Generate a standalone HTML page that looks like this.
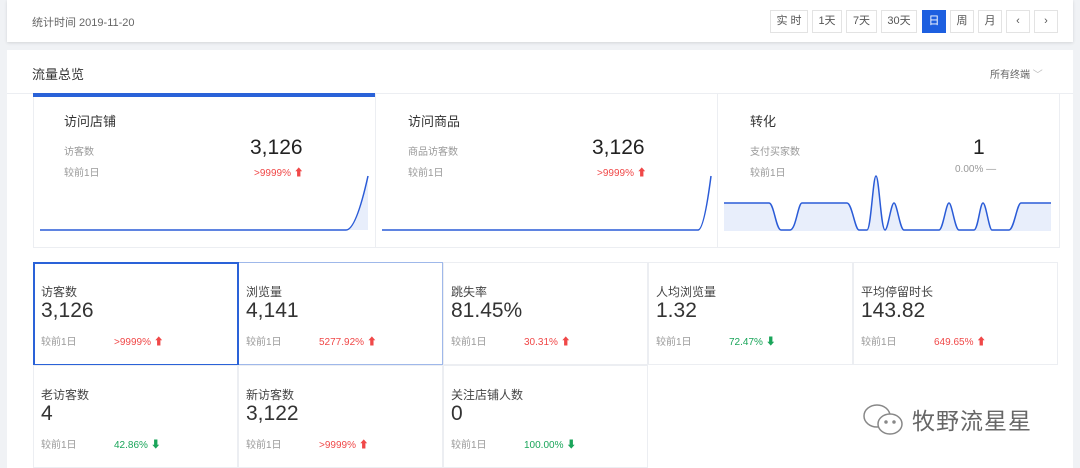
<!DOCTYPE html>
<html><head><meta charset="utf-8"><style>
*{margin:0;padding:0;box-sizing:border-box}
body{width:1080px;height:468px;background:#f0f2f5;font-family:"Liberation Sans","Noto Sans CJK SC",sans-serif;position:relative;overflow:hidden;color:#333}
.a{position:absolute}
.top{left:7px;top:0;width:1066px;height:42px;background:#fff;box-shadow:0 1px 3px rgba(0,0,0,.12)}
.btn{position:absolute;top:10px;height:23px;border:1px solid #e3e3e3;font-size:11px;color:#555;text-align:center;line-height:21px;background:#fff}
.main{left:7px;top:50px;width:1066px;height:418px;background:#fff}
.card{position:absolute;top:93px;height:155px;border:1px solid #eceef2;background:#fff}
.ct{position:absolute;font-size:13px;color:#333}
.lab{position:absolute;font-size:10px;color:#999}
.big{position:absolute;font-size:21px;color:#222}
.red{color:#f04848}.green{color:#1aa55a}
.m{position:absolute;width:205px;height:103px;border:1px solid #eceef2;background:#fff}
.m .t{position:absolute;left:7px;top:20px;font-size:12px;color:#444}
.m .v{position:absolute;left:7px;top:36px;font-size:21px;color:#333}
.m .c{position:absolute;left:7px;top:70px;font-size:10px;color:#999}
.m .p{position:absolute;left:80px;top:70px;font-size:10px}
</style></head><body>
<div class="a top"><div class="a" style="left:25px;top:14px;font-size:11px;color:#666">统计时间 2019-11-20</div></div>
<div class="btn" style="left:770px;width:38px">实 时</div>
<div class="btn" style="left:812px;width:30px">1天</div>
<div class="btn" style="left:846px;width:31px">7天</div>
<div class="btn" style="left:881px;width:36px">30天</div>
<div class="btn" style="left:922px;width:24px;background:#1d5fe0;border-color:#1d5fe0;color:#fff">日</div>
<div class="btn" style="left:950px;width:24px">周</div>
<div class="btn" style="left:978px;width:24px">月</div>
<div class="btn" style="left:1006px;width:24px">‹</div>
<div class="btn" style="left:1034px;width:24px">›</div>
<div class="a main"></div>
<div class="a" style="left:32px;top:64px;font-size:13px;color:#333">流量总览</div>
<div class="a" style="left:990px;top:66px;font-size:10px;color:#666">所有终端 <span style="color:#bbb">﹀</span></div>
<div class="a" style="left:7px;top:93px;width:1066px;height:1px;background:#eceef2"></div>

<div class="card" style="left:33px;width:343px"></div>
<div class="a" style="left:33px;top:93px;width:342px;height:4px;background:#2a62d8"></div>
<div class="ct" style="left:64px;top:111px">访问店铺</div>
<div class="lab" style="left:64px;top:143px">访客数</div>
<div class="lab" style="left:64px;top:164px">较前1日</div>
<div class="big" style="left:250px;top:136px">3,126</div>
<div class="lab red" style="left:254px;top:164px">&gt;9999% ⬆</div>
<svg class="a" style="left:38px;top:170px" width="332" height="62"><path d="M308 60 Q318 60 330 6 L330 60 Z" fill="#e8eefb"/><path d="M2 60 L308 60 Q318 60 330 6" fill="none" stroke="#2a5bd7" stroke-width="1.5"/></svg>

<div class="card" style="left:375px;width:343px"></div>
<div class="ct" style="left:408px;top:111px">访问商品</div>
<div class="lab" style="left:408px;top:143px">商品访客数</div>
<div class="lab" style="left:408px;top:164px">较前1日</div>
<div class="big" style="left:592px;top:136px">3,126</div>
<div class="lab red" style="left:597px;top:164px">&gt;9999% ⬆</div>
<svg class="a" style="left:380px;top:170px" width="332" height="62"><path d="M2 60 L318 60 Q324 60 331 6" fill="none" stroke="#2a5bd7" stroke-width="1.5"/></svg>

<div class="card" style="left:717px;width:343px"></div>
<div class="ct" style="left:750px;top:111px">转化</div>
<div class="lab" style="left:750px;top:143px">支付买家数</div>
<div class="lab" style="left:750px;top:164px">较前1日</div>
<div class="big" style="left:973px;top:136px">1</div>
<div class="lab" style="left:955px;top:164px">0.00% —</div>
<svg class="a" style="left:724px;top:170px" width="328" height="62">
<path d="M0 33 L45 33 C50 33 52 60 57 60 L66 60 C72 60 74 33 78 33 L123 33 C128 33 131 60 135 60 L143 60 C147 60 149 6 152 6 C155 6 157 60 161 60 C164 60 167 33 170 33 C173 33 176 60 180 60 L215 60 C219 60 222 33 225 33 C228 33 231 60 235 60 L250 60 C254 60 256 33 259 33 C262 33 265 60 268 60 L285 60 C290 60 293 33 297 33 L327 33 L327 61 L0 61 Z" fill="#e8eefb"/>
<path d="M0 33 L45 33 C50 33 52 60 57 60 L66 60 C72 60 74 33 78 33 L123 33 C128 33 131 60 135 60 L143 60 C147 60 149 6 152 6 C155 6 157 60 161 60 C164 60 167 33 170 33 C173 33 176 60 180 60 L215 60 C219 60 222 33 225 33 C228 33 231 60 235 60 L250 60 C254 60 256 33 259 33 C262 33 265 60 268 60 L285 60 C290 60 293 33 297 33 L327 33" fill="none" stroke="#2a5bd7" stroke-width="1.5"/></svg>

<div class="m" style="left:33px;top:262px"><div class="t">访客数</div><div class="v">3,126</div><div class="c">较前1日</div><div class="p red">&gt;9999% ⬆</div></div>
<div class="m" style="left:238px;top:262px;border-color:#9fb8ea"><div class="t">浏览量</div><div class="v">4,141</div><div class="c">较前1日</div><div class="p red">5277.92% ⬆</div></div>
<div class="m" style="left:443px;top:262px"><div class="t">跳失率</div><div class="v">81.45%</div><div class="c">较前1日</div><div class="p red">30.31% ⬆</div></div>
<div class="m" style="left:648px;top:262px"><div class="t">人均浏览量</div><div class="v">1.32</div><div class="c">较前1日</div><div class="p green">72.47% ⬇</div></div>
<div class="m" style="left:853px;top:262px"><div class="t">平均停留时长</div><div class="v">143.82</div><div class="c">较前1日</div><div class="p red">649.65% ⬆</div></div>
<div class="a" style="left:33px;top:262px;width:206px;height:104px;border:2px solid #2a62d8"></div>
<div class="m" style="left:33px;top:365px"><div class="t">老访客数</div><div class="v">4</div><div class="c">较前1日</div><div class="p green">42.86% ⬇</div></div>
<div class="m" style="left:238px;top:365px"><div class="t">新访客数</div><div class="v">3,122</div><div class="c">较前1日</div><div class="p red">&gt;9999% ⬆</div></div>
<div class="m" style="left:443px;top:365px"><div class="t">关注店铺人数</div><div class="v">0</div><div class="c">较前1日</div><div class="p green">100.00% ⬇</div></div>
<svg class="a" style="left:862px;top:402px" width="44" height="36" fill="#fff" stroke="#888" stroke-width="1.5"><ellipse cx="15" cy="14" rx="13" ry="11"/><ellipse cx="28" cy="22" rx="12" ry="10"/><circle cx="24" cy="20" r="1" fill="#888"/><circle cx="32" cy="20" r="1" fill="#888"/></svg>
<div class="a" style="left:912px;top:402px;font-size:23px;color:#666;letter-spacing:1px">牧野流星星</div>
</body></html>
